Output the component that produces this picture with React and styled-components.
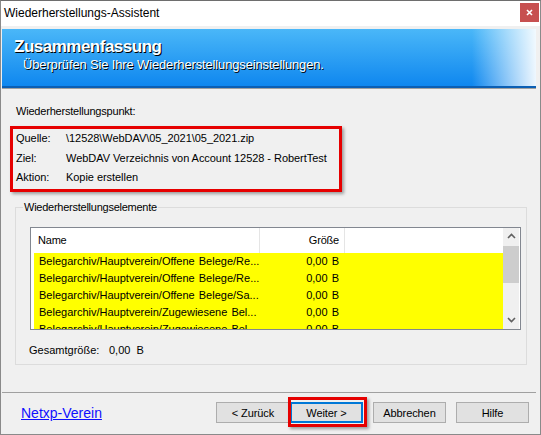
import React from 'react';
import styled, { createGlobalStyle } from 'styled-components';

const Global = createGlobalStyle`
  html, body { margin: 0; padding: 0; background: #f0f0f0; }
  * { box-sizing: border-box; }
`;

const Window = styled.div`
  width: 541px;
  height: 435px;
  display: flex;
  flex-direction: column;
  border: 1px solid #8a8a8a;
  border-top-color: #6e6e6e;
  background: #f0f0f0;
  font-family: "Liberation Sans", Arial, sans-serif;
  color: #000;
  overflow: hidden;
`;

const TitleBar = styled.div`
  height: 25px;
  flex: none;
  background: #fff;
  display: flex;
  align-items: flex-start;
  justify-content: space-between;
`;

const TitleText = styled.div`
  font-size: 12px;
  line-height: 25px;
  padding-left: 3px;
`;

const CloseButton = styled.div`
  width: 19px;
  height: 19px;
  margin-top: 2px;
  margin-right: 1px;
  background: #c75050;
  display: flex;
  align-items: center;
  justify-content: center;
`;

const Banner = styled.div`
  flex: none;
  margin: 3px 4px 0 1px;
  height: 59px;
  padding: 8px 0 0 12px;
  border-bottom: 2px solid #0b5fb4;
  background:
    linear-gradient(to right, rgba(255,255,255,0) 88%, rgba(255,255,255,0.55) 95%, rgba(255,255,255,0.93) 100%),
    linear-gradient(#4ab7f8, #0f87ef);
  color: #fff;
  text-shadow: 1px 1px 0 #000;
`;

const BannerTitle = styled.div`
  font-size: 17px;
  font-weight: bold;
  letter-spacing: -0.5px;
  line-height: 20px;
`;

const BannerSubtitle = styled.div`
  font-size: 13px;
  letter-spacing: -0.15px;
  line-height: 16px;
  margin-left: 9px;
`;

const Rule = styled.div`
  flex: none;
  height: 1px;
  margin: 0 4px 0 1px;
  background: #a0a0a0;
`;

const Content = styled.div`
  flex: 1;
  display: flex;
  flex-direction: column;
  padding: 16px 13px 0 9px;
`;

const SectionLabel = styled.div`
  font-size: 11px;
  line-height: 13px;
  letter-spacing: -0.2px;
  padding-left: 6px;
`;

const InfoBox = styled.div`
  margin-top: 8px;
  width: 332px;
  border: 3px solid #e60000;
  box-shadow: 2px 2px 3px rgba(0, 0, 0, 0.35);
  padding: 0 0 1px 3px;
  display: grid;
  grid-template-columns: 50px 1fr;
`;

const InfoCell = styled.div`
  font-size: 11px;
  line-height: 19.5px;
  letter-spacing: -0.05px;
  white-space: nowrap;
`;

const Group = styled.fieldset`
  margin: 9px 0 0 5px;
  border: 1px solid #dcdcdc;
  padding: 0 5px 7px 7px;
  min-width: 0;
`;

const GroupLegend = styled.legend`
  font-size: 11px;
  line-height: 13px;
  letter-spacing: -0.25px;
  padding: 0 1px;
`;

const ListView = styled.div`
  margin: 13px 0 0 7px;
  width: 491px;
  height: 103px;
  border: 1px solid #828790;
  background: #fff;
  display: flex;
  padding-right: 1px;
`;

const ListContent = styled.div`
  flex: 1;
  padding-left: 3px;
  overflow: hidden;
  display: flex;
  flex-direction: column;
`;

const HeaderRow = styled.div`
  display: grid;
  grid-template-columns: 226px 85px;
  height: 25px;
  flex: none;
`;

const HeaderCell = styled.div`
  font-size: 11px;
  letter-spacing: -0.2px;
  line-height: 25px;
  border-right: 1px solid #e5e5e5;
  padding: ${p => (p.$right ? '0 5px 0 0' : '0 0 0 4px')};
  text-align: ${p => (p.$right ? 'right' : 'left')};
`;

const ItemRow = styled.div`
  display: grid;
  grid-template-columns: 226px 85px;
  height: 17px;
  flex: none;
  background: #ffff00;
`;

const ItemCell = styled.div`
  font-size: 11px;
  line-height: 17px;
  white-space: nowrap;
  overflow: hidden;
  padding: ${p => (p.$right ? '0 6px 0 0' : '0 0 0 5px')};
  text-align: ${p => (p.$right ? 'right' : 'left')};
  word-spacing: 1px;
`;

const ScrollBar = styled.div`
  width: 16px;
  flex: none;
  background: #f0f0f0;
  display: flex;
  flex-direction: column;
`;

const ScrollArrow = styled.div`
  height: 17px;
  flex: none;
  display: flex;
  align-items: center;
  justify-content: center;
  margin-top: ${p => (p.$bottom ? 'auto' : '0')};
`;

const ScrollThumb = styled.div`
  height: 37px;
  margin-top: 1px;
  background: #cdcdcd;
  flex: none;
`;

const TotalRow = styled.div`
  display: flex;
  margin: 14px 0 0 6px;
  font-size: 11px;
  line-height: 13px;
`;

const TotalLabel = styled.span`
  width: 80px;
`;

const TotalValue = styled.span`
  white-space: pre;
`;

const Footer = styled.div`
  flex: none;
  display: flex;
  align-items: center;
  height: 30px;
  padding: 9px 11px 0 20px;
  margin-bottom: 11px;
`;

const Link = styled.a`
  font-size: 14px;
  color: #0f0fff;
  text-decoration: underline;
  margin-right: auto;
  cursor: pointer;
`;

const ButtonSlot = styled.div`
  position: relative;
  margin-left: ${p => p.$gap || 0}px;
`;

const Button = styled.div`
  width: ${p => p.$w || 73}px;
  height: 21px;
  border: ${p => (p.$focused ? '2px solid #0078d7' : '1px solid #adadad')};
  background: #e1e1e1;
  font-size: 11px;
  letter-spacing: -0.1px;
  display: flex;
  align-items: center;
  justify-content: center;
`;

const Highlight = styled.div`
  position: absolute;
  left: -2px;
  top: -5px;
  right: -4px;
  bottom: -4px;
  border: 3px solid #e60000;
  box-shadow: 2px 2px 3px rgba(0, 0, 0, 0.35);
  pointer-events: none;
`;

const Chevron = ({ up }) => (
  <svg width="9" height="6" viewBox="0 0 9 6">
    <path
      d={up ? 'M1 5 L4.5 1.5 L8 5' : 'M1 1 L4.5 4.5 L8 1'}
      fill="none"
      stroke="#606060"
      strokeWidth="1.6"
    />
  </svg>
);

const items = [
  'Belegarchiv/Hauptverein/Offene Belege/Re...',
  'Belegarchiv/Hauptverein/Offene Belege/Re...',
  'Belegarchiv/Hauptverein/Offene Belege/Sa...',
  'Belegarchiv/Hauptverein/Zugewiesene Bel...',
  'Belegarchiv/Hauptverein/Zugewiesene Bel...',
];

export default function App() {
  return (
    <>
      <Global />
      <Window>
        <TitleBar>
          <TitleText>Wiederherstellungs-Assistent</TitleText>
          <CloseButton>
            <svg width="7" height="7" viewBox="0 0 7 7">
              <path d="M1 1 L6 6 M6 1 L1 6" stroke="#fff" strokeWidth="1.6" />
            </svg>
          </CloseButton>
        </TitleBar>
        <Banner>
          <BannerTitle>Zusammenfassung</BannerTitle>
          <BannerSubtitle>Überprüfen Sie Ihre Wiederherstellungseinstellungen.</BannerSubtitle>
        </Banner>
        <Rule />
        <Content>
          <SectionLabel>Wiederherstellungspunkt:</SectionLabel>
          <InfoBox>
            <InfoCell>Quelle:</InfoCell>
            <InfoCell>\12528\WebDAV\05_2021\05_2021.zip</InfoCell>
            <InfoCell>Ziel:</InfoCell>
            <InfoCell>WebDAV Verzeichnis von Account 12528 - RobertTest</InfoCell>
            <InfoCell>Aktion:</InfoCell>
            <InfoCell>Kopie erstellen</InfoCell>
          </InfoBox>
          <Group>
            <GroupLegend>Wiederherstellungselemente</GroupLegend>
            <ListView>
              <ListContent>
                <HeaderRow>
                  <HeaderCell>Name</HeaderCell>
                  <HeaderCell $right>Größe</HeaderCell>
                </HeaderRow>
                {items.map((t, i) => (
                  <ItemRow key={i}>
                    <ItemCell>{t}</ItemCell>
                    <ItemCell $right>0,00 B</ItemCell>
                  </ItemRow>
                ))}
              </ListContent>
              <ScrollBar>
                <ScrollArrow><Chevron up /></ScrollArrow>
                <ScrollThumb />
                <ScrollArrow $bottom><Chevron /></ScrollArrow>
              </ScrollBar>
            </ListView>
            <TotalRow>
              <TotalLabel>Gesamtgröße:</TotalLabel>
              <TotalValue>0,00  B</TotalValue>
            </TotalRow>
          </Group>
        </Content>
        <Rule />
        <Footer>
          <Link>Netxp-Verein</Link>
          <ButtonSlot><Button $w={74}>&lt; Zurück</Button></ButtonSlot>
          <ButtonSlot>
            <Button $focused>Weiter &gt;</Button>
            <Highlight />
          </ButtonSlot>
          <ButtonSlot $gap={10}><Button>Abbrechen</Button></ButtonSlot>
          <ButtonSlot $gap={10}><Button>Hilfe</Button></ButtonSlot>
        </Footer>
      </Window>
    </>
  );
}
